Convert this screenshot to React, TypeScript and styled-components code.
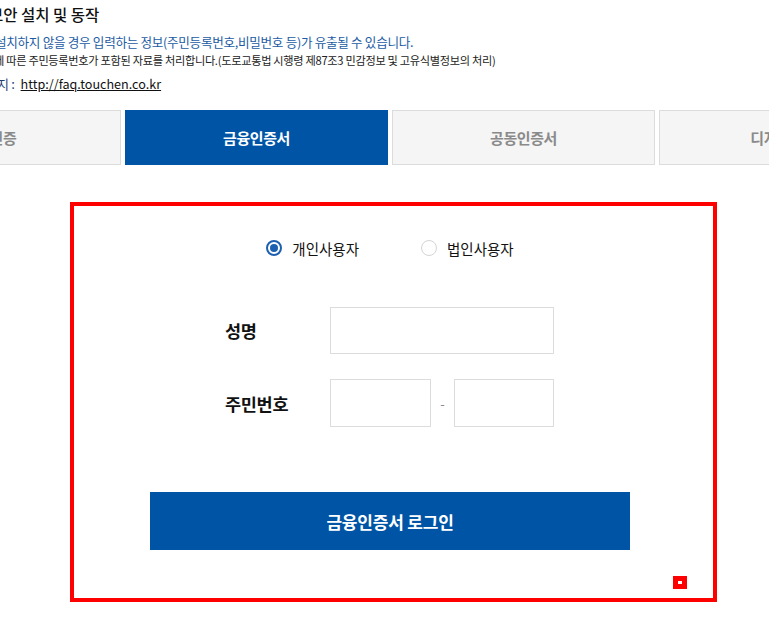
import React, { useState } from "react";
import styled, { createGlobalStyle } from "styled-components";

const GlobalStyle = createGlobalStyle`
  html, body {
    margin: 0;
    padding: 0;
    background: #fff;
    overflow: hidden;
  }
  body {
    font-family: "Noto Sans CJK KR", "Noto Sans", sans-serif;
    color: #111;
  }
  * { box-sizing: border-box; }
`;

const Page = styled.div`
  width: 769px;
  height: 639px;
  overflow: hidden;
`;

const Notice = styled.section`
  display: flex;
  flex-direction: column;
  white-space: nowrap;
`;

const Title = styled.h2<{ $shift: number }>`
  margin: 0 0 5px ${(p) => p.$shift}px;
  font-size: 15.5px;
  font-weight: 500;
  line-height: 28px;
  color: #111;
`;

const Line = styled.p<{ $shift: number; $tone?: "blue" | "dark"; $size: number; $gap?: number }>`
  margin: ${(p) => p.$gap ?? 0}px 0 0 ${(p) => p.$shift}px;
  font-size: ${(p) => p.$size}px;
  line-height: 18px;
  letter-spacing: -0.3px;
  color: ${(p) => (p.$tone === "blue" ? "#1c5ba3" : "#222")};
`;

const SiteLabel = styled.span`
  color: #1c3f74;
  margin-right: 6px;
`;

const SiteLink = styled.a`
  color: #111;
  text-decoration: underline;
  letter-spacing: 0;
  font-size: 12.6px;
`;

const TabRow = styled.nav`
  display: flex;
  gap: 4px;
  margin: 17px 0 0 -142px;
`;

const Tab = styled.button<{ $active?: boolean }>`
  flex: 0 0 263px;
  height: 55px;
  margin: 0;
  padding: 0;
  border: 1px solid ${(p) => (p.$active ? "#0054a6" : "#dcdcdc")};
  background: ${(p) => (p.$active ? "#0054a6" : "#f5f5f5")};
  color: ${(p) => (p.$active ? "#fff" : "#8a8a8a")};
  font-family: inherit;
  font-size: 15px;
  font-weight: 700;
  letter-spacing: -0.4px;
`;

const LoginBox = styled.div`
  position: relative;
  width: 647px;
  height: 400px;
  margin: 37px 0 0 70px;
  border: 4px solid #ff0000;
  padding: 32px 83px 0 76px;
  display: flex;
  flex-direction: column;
  align-items: center;
`;

const RadioRow = styled.div`
  display: flex;
  align-items: center;
  gap: 62px;
  height: 20px;
`;

const RadioOption = styled.label`
  display: flex;
  align-items: center;
  gap: 10px;
  font-size: 14.5px;
  color: #111;
  cursor: pointer;
`;

const RadioDot = styled.span<{ $checked: boolean }>`
  position: relative;
  width: 16px;
  height: 16px;
  border-radius: 50%;
  border: ${(p) => (p.$checked ? "2px solid #1d5fb0" : "1px solid #d4d4d4")};
  background: #fff;

  &::after {
    content: "";
    display: ${(p) => (p.$checked ? "block" : "none")};
    position: absolute;
    left: 2px;
    top: 2px;
    width: 8px;
    height: 8px;
    border-radius: 50%;
    background: #1d5fb0;
  }
`;

const Form = styled.div`
  width: 329px;
  margin: 49px 1px 0 0;
  display: flex;
  flex-direction: column;
  gap: 25px;
`;

const FieldRow = styled.div`
  display: flex;
  align-items: center;
`;

const FieldLabel = styled.span`
  width: 105px;
  font-size: 17.5px;
  font-weight: 700;
  color: #111;
  letter-spacing: -0.3px;
`;

const Input = styled.input<{ $w: number; $h: number }>`
  width: ${(p) => p.$w}px;
  height: ${(p) => p.$h}px;
  border: 1px solid #dcdcdc;
  outline: none;
  padding: 0 10px;
  font-family: inherit;
  font-size: 14px;
`;

const Dash = styled.span`
  width: 23px;
  text-align: center;
  color: #888;
  font-size: 13px;
`;

const LoginButton = styled.button`
  width: 480px;
  height: 58px;
  margin-top: 65px;
  border: none;
  background: #0054a6;
  color: #fff;
  font-family: inherit;
  font-size: 17px;
  font-weight: 700;
  letter-spacing: -0.2px;
`;

const Marker = styled.span`
  position: absolute;
  left: 599px;
  top: 370px;
  width: 14px;
  height: 13px;
  border: 5px solid #ff0000;
  background: #fff;
`;

const tabs = ["간편인증", "금융인증서", "공동인증서", "디지털인증서"];

export default function App() {
  const [activeTab, setActiveTab] = useState(1);
  const [userType, setUserType] = useState<"personal" | "corp">("personal");

  return (
    <Page>
      <GlobalStyle />
      <Notice>
        <Title $shift={-11}>보안 설치 및 동작</Title>
        <Line $shift={-5} $size={12.6} $tone="blue">
          설치하지 않을 경우 입력하는 정보(주민등록번호,비밀번호 등)가 유출될 수 있습니다.
        </Line>
        <Line $shift={-6} $size={11.2}>
          에 따른 주민등록번호가 포함된 자료를 처리합니다.(도로교통법 시행령 제87조3 민감정보 및 고유식별정보의 처리)
        </Line>
        <Line $shift={-3} $size={13} $gap={6}>
          <SiteLabel>지 :</SiteLabel>
          <SiteLink href="#">http://faq.touchen.co.kr</SiteLink>
        </Line>
      </Notice>

      <TabRow>
        {tabs.map((t, i) => (
          <Tab key={t} $active={i === activeTab} onClick={() => setActiveTab(i)}>
            {t}
          </Tab>
        ))}
      </TabRow>

      <LoginBox>
        <RadioRow>
          <RadioOption onClick={() => setUserType("personal")}>
            <RadioDot $checked={userType === "personal"} />
            개인사용자
          </RadioOption>
          <RadioOption onClick={() => setUserType("corp")}>
            <RadioDot $checked={userType === "corp"} />
            법인사용자
          </RadioOption>
        </RadioRow>

        <Form>
          <FieldRow>
            <FieldLabel>성명</FieldLabel>
            <Input $w={224} $h={47} />
          </FieldRow>
          <FieldRow>
            <FieldLabel>주민번호</FieldLabel>
            <Input $w={101} $h={48} />
            <Dash>-</Dash>
            <Input $w={100} $h={48} type="password" />
          </FieldRow>
        </Form>

        <LoginButton>금융인증서 로그인</LoginButton>
        <Marker />
      </LoginBox>
    </Page>
  );
}
